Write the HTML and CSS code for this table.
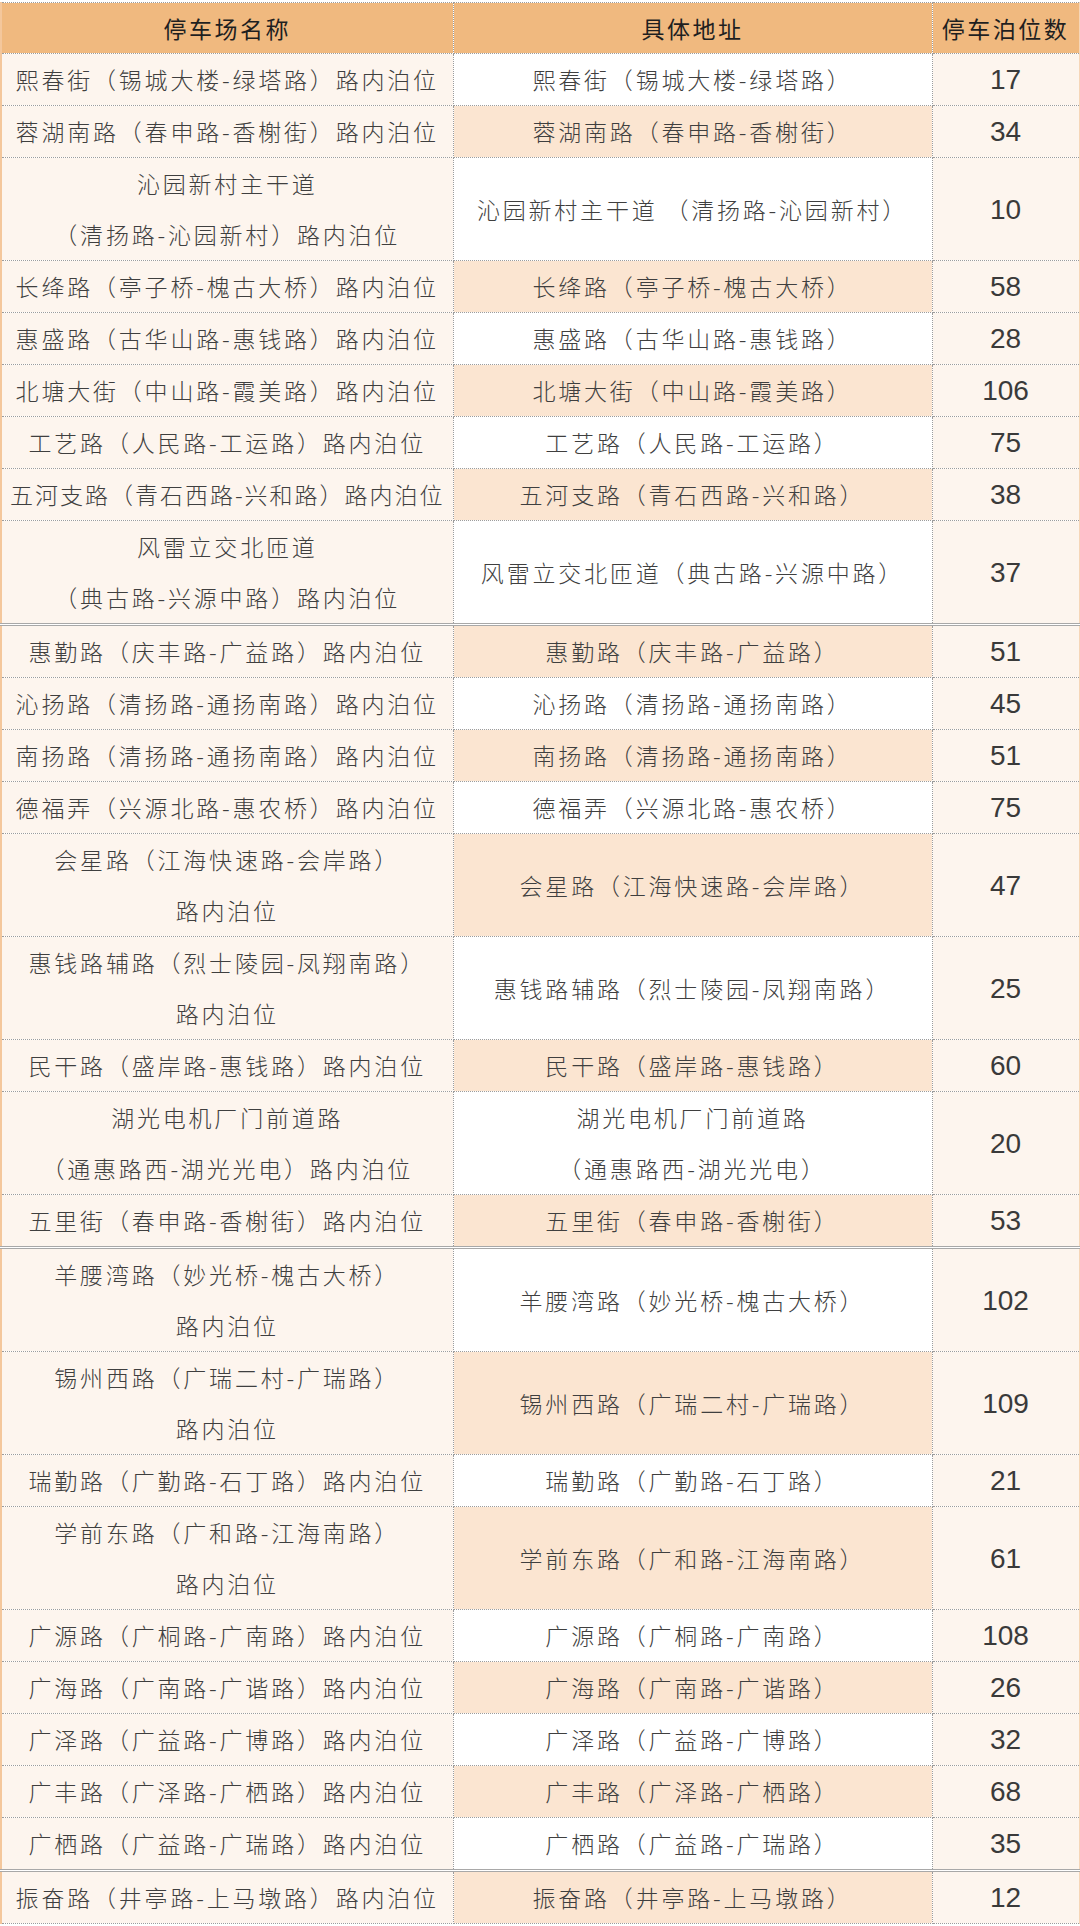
FILE: index.html
```html
<!DOCTYPE html>
<html lang="zh-CN">
<head>
<meta charset="utf-8">
<title>停车泊位</title>
<link rel="stylesheet" href="styles.css">
</head>
<body>
<table class="park">
  <colgroup>
    <col class="c-name">
    <col class="c-addr">
    <col class="c-num">
  </colgroup>
  <thead>
    <tr><th>停车场名称</th><th>具体地址</th><th>停车泊位数</th></tr>
  </thead>
  <tbody>
    <tr><td>熙春街（锡城大楼-绿塔路）路内泊位</td><td>熙春街（锡城大楼-绿塔路）</td><td class="num">17</td></tr>
    <tr><td>蓉湖南路（春申路-香榭街）路内泊位</td><td>蓉湖南路（春申路-香榭街）</td><td class="num">34</td></tr>
    <tr><td>沁园新村主干道<br>（清扬路-沁园新村）路内泊位</td><td>沁园新村主干道 （清扬路-沁园新村）</td><td class="num">10</td></tr>
    <tr><td>长绛路（亭子桥-槐古大桥）路内泊位</td><td>长绛路（亭子桥-槐古大桥）</td><td class="num">58</td></tr>
    <tr><td>惠盛路（古华山路-惠钱路）路内泊位</td><td>惠盛路（古华山路-惠钱路）</td><td class="num">28</td></tr>
    <tr><td>北塘大街（中山路-霞美路）路内泊位</td><td>北塘大街（中山路-霞美路）</td><td class="num">106</td></tr>
    <tr><td>工艺路（人民路-工运路）路内泊位</td><td>工艺路（人民路-工运路）</td><td class="num">75</td></tr>
    <tr><td class="tight">五河支路（青石西路-兴和路）路内泊位</td><td>五河支路（青石西路-兴和路）</td><td class="num">38</td></tr>
    <tr><td>风雷立交北匝道<br>（典古路-兴源中路）路内泊位</td><td>风雷立交北匝道（典古路-兴源中路）</td><td class="num">37</td></tr>
    <tr class="pb"><td>惠勤路（庆丰路-广益路）路内泊位</td><td>惠勤路（庆丰路-广益路）</td><td class="num">51</td></tr>
    <tr><td>沁扬路（清扬路-通扬南路）路内泊位</td><td>沁扬路（清扬路-通扬南路）</td><td class="num">45</td></tr>
    <tr><td>南扬路（清扬路-通扬南路）路内泊位</td><td>南扬路（清扬路-通扬南路）</td><td class="num">51</td></tr>
    <tr><td>德福弄（兴源北路-惠农桥）路内泊位</td><td>德福弄（兴源北路-惠农桥）</td><td class="num">75</td></tr>
    <tr><td>会星路（江海快速路-会岸路）<br>路内泊位</td><td>会星路（江海快速路-会岸路）</td><td class="num">47</td></tr>
    <tr><td>惠钱路辅路（烈士陵园-凤翔南路）<br>路内泊位</td><td>惠钱路辅路（烈士陵园-凤翔南路）</td><td class="num">25</td></tr>
    <tr><td>民干路（盛岸路-惠钱路）路内泊位</td><td>民干路（盛岸路-惠钱路）</td><td class="num">60</td></tr>
    <tr><td>湖光电机厂门前道路<br>（通惠路西-湖光光电）路内泊位</td><td>湖光电机厂门前道路<br>（通惠路西-湖光光电）</td><td class="num">20</td></tr>
    <tr><td>五里街（春申路-香榭街）路内泊位</td><td>五里街（春申路-香榭街）</td><td class="num">53</td></tr>
    <tr class="pb"><td>羊腰湾路（妙光桥-槐古大桥）<br>路内泊位</td><td>羊腰湾路（妙光桥-槐古大桥）</td><td class="num">102</td></tr>
    <tr><td>锡州西路（广瑞二村-广瑞路）<br>路内泊位</td><td>锡州西路（广瑞二村-广瑞路）</td><td class="num">109</td></tr>
    <tr><td>瑞勤路（广勤路-石丁路）路内泊位</td><td>瑞勤路（广勤路-石丁路）</td><td class="num">21</td></tr>
    <tr><td>学前东路（广和路-江海南路）<br>路内泊位</td><td>学前东路（广和路-江海南路）</td><td class="num">61</td></tr>
    <tr><td>广源路（广桐路-广南路）路内泊位</td><td>广源路（广桐路-广南路）</td><td class="num">108</td></tr>
    <tr><td>广海路（广南路-广谐路）路内泊位</td><td>广海路（广南路-广谐路）</td><td class="num">26</td></tr>
    <tr><td>广泽路（广益路-广博路）路内泊位</td><td>广泽路（广益路-广博路）</td><td class="num">32</td></tr>
    <tr><td>广丰路（广泽路-广栖路）路内泊位</td><td>广丰路（广泽路-广栖路）</td><td class="num">68</td></tr>
    <tr><td>广栖路（广益路-广瑞路）路内泊位</td><td>广栖路（广益路-广瑞路）</td><td class="num">35</td></tr>
    <tr class="pb"><td>振奋路（井亭路-上马墩路）路内泊位</td><td>振奋路（井亭路-上马墩路）</td><td class="num">12</td></tr>
  </tbody>
</table>
</body>
</html>
```

FILE: styles.css
```css
html, body {
  margin: 0;
  padding: 0;
  background: #ffffff;
}

body {
  padding-top: 2px;
  font-family: "Noto Sans CJK SC", "Noto Sans", sans-serif;
}

.park {
  width: 1078px;
  table-layout: fixed;
  border-collapse: collapse;
  border-left: 2px solid #f4c79c;
  border-right: 1px solid #f6d6b8;
}

.c-name { width: 452px; }
.c-addr { width: 479px; }
.c-num  { width: 147px; }

.park th,
.park td {
  padding: 0;
  text-align: center;
  vertical-align: middle;
  border: 1px dotted #9c9c9c;
  white-space: nowrap;
  overflow: hidden;
}

.park th {
  height: 50px;
  line-height: 50px;
  background: #f0b97f;
  color: #1f1f1f;
  font-size: 23px;
  font-weight: 400;
  letter-spacing: 2.5px;
}

.park td {
  line-height: 51px;
  font-size: 23px;
  font-weight: 300;
  letter-spacing: 2.8px;
  color: #3f3f3f;
  background: #fdf5ee;
}

.park td.tight {
  letter-spacing: 2px;
}

.park tbody tr:nth-child(odd) td:nth-child(2) {
  background: #ffffff;
}

.park tbody tr:nth-child(even) td:nth-child(2) {
  background: #fbe5d1;
}

.park td.num {
  font-family: "Liberation Sans Narrow", "Liberation Sans", sans-serif;
  font-size: 28px;
  font-weight: 400;
  letter-spacing: 0;
  color: #3a3a3a;
}

.park tr.pb td {
  border-top: 3px double #a8a8a8;
}
```
